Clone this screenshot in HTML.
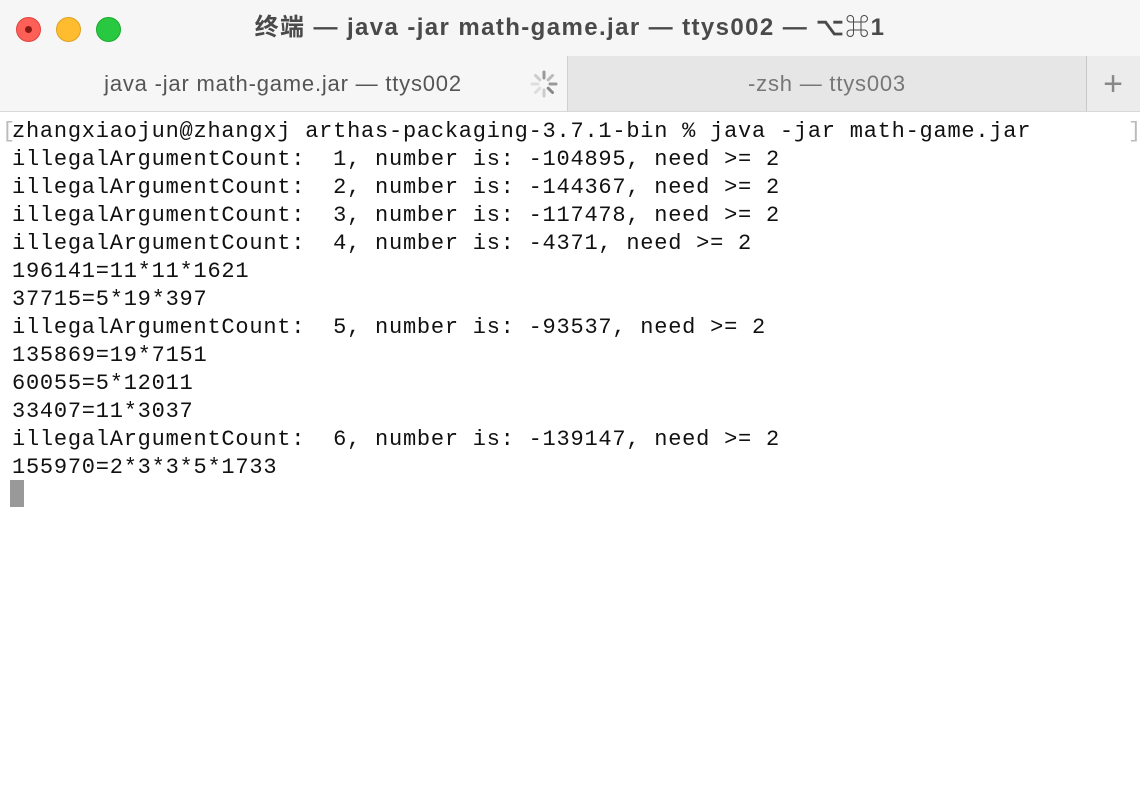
<!DOCTYPE html>
<html><head><meta charset="utf-8"><style>
body{margin:0;width:1140px;height:798px;overflow:hidden;background:#fff;font-family:"Liberation Sans","Noto Sans CJK SC",sans-serif;position:relative}
.title{position:absolute;left:0;top:0;width:1140px;height:56px;background:#f6f6f6;text-align:center;line-height:56px;font-size:24px;letter-spacing:1.4px;font-weight:bold;color:#4a4a4a}
.dot{position:absolute;top:17px;width:23px;height:23px;border-radius:50%}
.tabs{position:absolute;left:0;top:56px;width:1140px;height:56px;background:#f6f6f6;border-bottom:1px solid #d8d8d8;box-sizing:border-box}
.tab{position:absolute;top:0;height:55px;line-height:56px;text-align:center;font-size:22px;letter-spacing:0.8px;color:#555}
.term{position:absolute;left:12px;top:118px;font-family:"Liberation Mono",monospace;font-size:22px;letter-spacing:0.76px;line-height:28px;white-space:pre;color:#111}
</style></head><body>
<div class="title">终端 — java -jar math-game.jar — ttys002 — ⌥⌘1</div>
<div class="dot" style="left:16px;background:#fe5f57;border:0.5px solid #e0443e"><div style="position:absolute;left:8px;top:8px;width:7px;height:7px;border-radius:50%;background:#8b1a14"></div></div>
<div class="dot" style="left:56px;background:#febc2e;border:0.5px solid #dea123"></div>
<div class="dot" style="left:96px;background:#28c840;border:0.5px solid #1aab29"></div>
<div class="tabs">
<div class="tab" style="left:0;width:566px;background:#f6f6f6">java -jar math-game.jar — ttys002</div>
<svg style="position:absolute;left:528px;top:12px" width="32" height="32" viewBox="0 0 32 32"><g stroke-width="3" stroke-linecap="round">
<line x1="16" y1="4" x2="16" y2="10" stroke="#999"/><line x1="24.5" y1="7.5" x2="20.2" y2="11.8" stroke="#bbb"/><line x1="28" y1="16" x2="22" y2="16" stroke="#999"/><line x1="24.5" y1="24.5" x2="20.2" y2="20.2" stroke="#888"/><line x1="16" y1="28" x2="16" y2="22" stroke="#ccc"/><line x1="7.5" y1="24.5" x2="11.8" y2="20.2" stroke="#ddd"/><line x1="4" y1="16" x2="10" y2="16" stroke="#ddd"/><line x1="7.5" y1="7.5" x2="11.8" y2="11.8" stroke="#ccc"/></g></svg>
<div class="tab" style="left:567px;width:518px;background:#e6e6e6;border-left:1px solid #d0d0d0;border-right:1px solid #c8c8c8;color:#777">-zsh — ttys003</div>
<div class="tab" style="left:1087px;width:53px;font-size:34px;font-weight:200;color:#888;background:#ececec">+</div>
</div>
<div style="position:absolute;left:2px;top:118px;font-family:'Liberation Mono',monospace;font-size:22px;line-height:28px;color:#bbb">[</div>
<div style="position:absolute;left:1128px;top:118px;font-family:'Liberation Mono',monospace;font-size:22px;line-height:28px;color:#bbb">]</div>
<div class="term">zhangxiaojun@zhangxj arthas-packaging-3.7.1-bin % java -jar math-game.jar
illegalArgumentCount:  1, number is: -104895, need >= 2
illegalArgumentCount:  2, number is: -144367, need >= 2
illegalArgumentCount:  3, number is: -117478, need >= 2
illegalArgumentCount:  4, number is: -4371, need >= 2
196141=11*11*1621
37715=5*19*397
illegalArgumentCount:  5, number is: -93537, need >= 2
135869=19*7151
60055=5*12011
33407=11*3037
illegalArgumentCount:  6, number is: -139147, need >= 2
155970=2*3*3*5*1733</div>
<div style="position:absolute;left:10px;top:480px;width:14px;height:27px;background:#999"></div>
</body></html>
